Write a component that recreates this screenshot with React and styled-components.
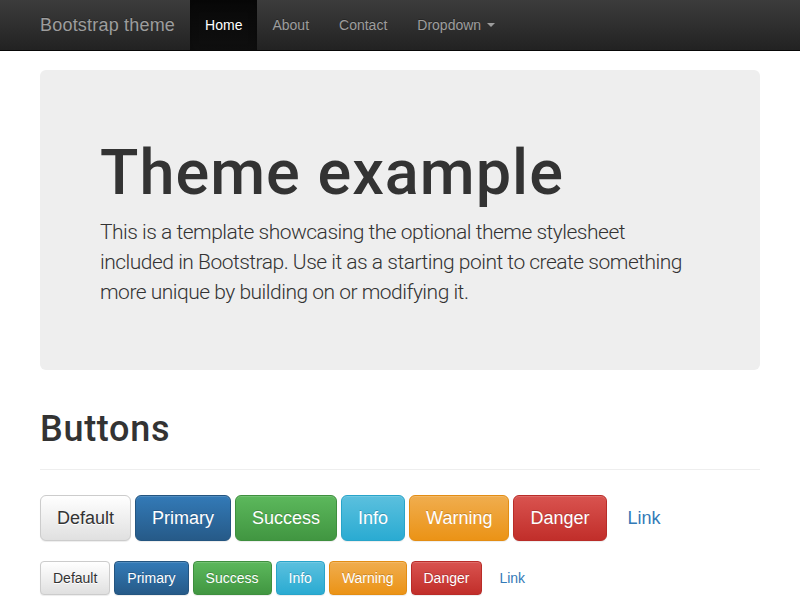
import React from "react";
import styled, { createGlobalStyle, css } from "styled-components";

const Global = createGlobalStyle`
  html, body { margin: 0; padding: 0; background: #fff; }
  body {
    font-family: "Liberation Sans", Arial, Helvetica, sans-serif;
    font-size: 14px;
    line-height: 1.42857143;
    color: #333;
  }
  * { box-sizing: border-box; }
`;

const Navbar = styled.nav`
  height: 51px;
  background-image: linear-gradient(to bottom, #3c3c3c 0, #222 100%);
  border-bottom: 1px solid #080808;
  margin-bottom: 19px;
`;

const NavInner = styled.div`
  width: 750px;
  margin: 0 auto;
  padding: 0 15px;
  display: flex;
  align-items: stretch;
  height: 50px;
`;

const Brand = styled.a`
  margin-left: -15px;
  padding: 15px;
  font-size: 18px;
  line-height: 20px;
  color: #9d9d9d;
  text-shadow: 0 -1px 0 rgba(0, 0, 0, 0.25);
  text-decoration: none;
  letter-spacing: 0.2px;
`;

const NavList = styled.ul`
  display: flex;
  list-style: none;
  margin: 0;
  padding: 0;
`;

const NavItem = styled.li`
  display: flex;
`;

const NavLink = styled.a`
  display: flex;
  align-items: center;
  padding: 15px;
  line-height: 20px;
  font-size: 14px;
  text-decoration: none;
  color: ${(p) => (p.$active ? "#fff" : "#9d9d9d")};
  text-shadow: 0 -1px 0 rgba(0, 0, 0, 0.25);
  ${(p) =>
    p.$active &&
    css`
      background-image: linear-gradient(to bottom, #080808 0, #0f0f0f 100%);
      box-shadow: inset 0 3px 9px rgba(0, 0, 0, 0.25);
    `}
`;

const Caret = styled.span`
  display: inline-block;
  width: 0;
  height: 0;
  margin-left: 6px;
  border-top: 4px solid #9d9d9d;
  border-left: 4px solid transparent;
  border-right: 4px solid transparent;
`;

const Container = styled.main`
  width: 720px;
  margin: 0 auto;
`;

const Jumbotron = styled.section`
  background: #eee;
  border-radius: 6px;
  padding: 48px 60px;
  margin-bottom: 40px;
`;

const JumboTitle = styled.h1`
  margin: 20px 0 10px;
  font-family: Roboto, "Liberation Sans", Arial, sans-serif;
  font-size: 63px;
  line-height: 1.1;
  font-weight: 500;
  letter-spacing: 1px;
  color: #333;
`;

const JumboText = styled.p`
  margin: 0 0 15px;
  font-family: Roboto, "Liberation Sans", Arial, sans-serif;
  font-size: 21px;
  line-height: 30px;
  font-weight: 300;
  letter-spacing: -0.5px;
  color: #333;
`;

const PageHeader = styled.div`
  padding-bottom: 9px;
  border-bottom: 1px solid #eee;
  margin-bottom: 20px;
`;

const SectionTitle = styled.h1`
  margin: 0 0 10px;
  font-family: Roboto, "Liberation Sans", Arial, sans-serif;
  font-size: 36px;
  line-height: 1.1;
  font-weight: 500;
  letter-spacing: 0.7px;
  color: #333;
`;

const ButtonRow = styled.div`
  display: flex;
  align-items: center;
  gap: 4px;
  padding: 5px 0;
  margin-bottom: 10px;
`;

const variants = {
  default: { from: "#fff", to: "#e0e0e0", border: "#ccc", color: "#333", shadow: "0 1px 0 #fff" },
  primary: { from: "#337ab7", to: "#265a88", border: "#245580", color: "#fff", shadow: "0 -1px 0 rgba(0,0,0,.2)" },
  success: { from: "#5cb85c", to: "#419641", border: "#3e8f3e", color: "#fff", shadow: "0 -1px 0 rgba(0,0,0,.2)" },
  info: { from: "#5bc0de", to: "#2aabd2", border: "#28a4c9", color: "#fff", shadow: "0 -1px 0 rgba(0,0,0,.2)" },
  warning: { from: "#f0ad4e", to: "#eb9316", border: "#e38d13", color: "#fff", shadow: "0 -1px 0 rgba(0,0,0,.2)" },
  danger: { from: "#d9534f", to: "#c12e2a", border: "#b92c28", color: "#fff", shadow: "0 -1px 0 rgba(0,0,0,.2)" },
};

const Btn = styled.button`
  font-family: inherit;
  cursor: pointer;
  border: 1px solid ${(p) => variants[p.$v].border};
  background-image: linear-gradient(to bottom, ${(p) => variants[p.$v].from} 0, ${(p) => variants[p.$v].to} 100%);
  color: ${(p) => variants[p.$v].color};
  text-shadow: ${(p) => variants[p.$v].shadow};
  box-shadow: inset 0 1px 0 rgba(255, 255, 255, 0.15), 0 1px 1px rgba(0, 0, 0, 0.075);
  ${(p) =>
    p.$lg
      ? css`
          padding: 10px 16px;
          font-size: 18px;
          line-height: 24px;
          border-radius: 6px;
        `
      : css`
          padding: 6px 12px;
          font-size: 14px;
          line-height: 20px;
          border-radius: 4px;
        `}
`;

const LinkBtn = styled.a`
  color: #337ab7;
  text-decoration: none;
  border: 1px solid transparent;
  ${(p) =>
    p.$lg
      ? css`
          padding: 10px 16px;
          font-size: 18px;
          line-height: 24px;
        `
      : css`
          padding: 6px 12px;
          font-size: 14px;
          line-height: 20px;
        `}
`;

const labels = [
  ["default", "Default"],
  ["primary", "Primary"],
  ["success", "Success"],
  ["info", "Info"],
  ["warning", "Warning"],
  ["danger", "Danger"],
];

function Buttons({ lg }) {
  return (
    <ButtonRow>
      {labels.map(([v, t]) => (
        <Btn key={v} $v={v} $lg={lg} type="button">
          {t}
        </Btn>
      ))}
      <LinkBtn href="#" $lg={lg}>
        Link
      </LinkBtn>
    </ButtonRow>
  );
}

export default function App() {
  return (
    <>
      <Global />
      <Navbar>
        <NavInner>
          <Brand href="#">Bootstrap theme</Brand>
          <NavList>
            <NavItem>
              <NavLink href="#" $active>Home</NavLink>
            </NavItem>
            <NavItem>
              <NavLink href="#">About</NavLink>
            </NavItem>
            <NavItem>
              <NavLink href="#">Contact</NavLink>
            </NavItem>
            <NavItem>
              <NavLink href="#">
                Dropdown <Caret />
              </NavLink>
            </NavItem>
          </NavList>
        </NavInner>
      </Navbar>
      <Container>
        <Jumbotron>
          <JumboTitle>Theme example</JumboTitle>
          <JumboText>
            This is a template showcasing the optional theme stylesheet included in Bootstrap. Use it as a
            starting point to create something more unique by building on or modifying it.
          </JumboText>
        </Jumbotron>
        <PageHeader>
          <SectionTitle>Buttons</SectionTitle>
        </PageHeader>
        <Buttons lg />
        <Buttons />
      </Container>
    </>
  );
}
